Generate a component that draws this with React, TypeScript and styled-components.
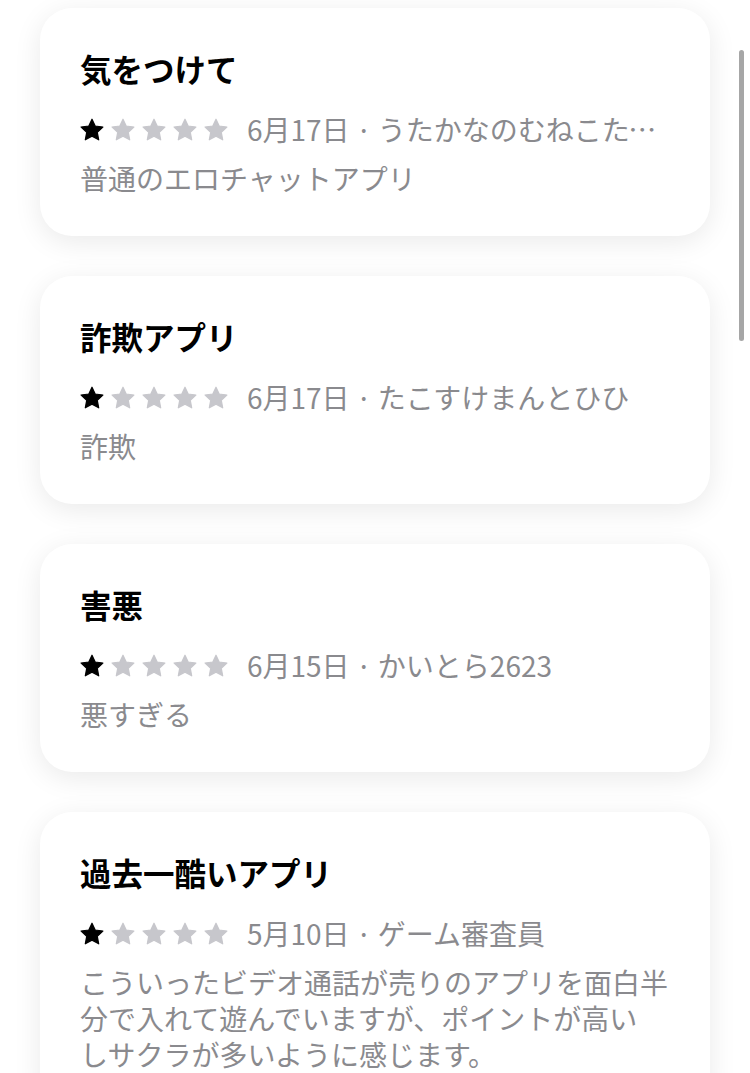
import React from "react";
import styled, { createGlobalStyle } from "styled-components";

const Global = createGlobalStyle`
  html, body { margin: 0; padding: 0; background: #ffffff; }
  body {
    font-family: "Noto Sans CJK JP", "Noto Sans", sans-serif;
    -webkit-font-smoothing: antialiased;
    overflow: hidden;
  }
`;

const Page = styled.div`
  display: flex;
  flex-direction: column;
  gap: 40px;
  padding: 8px 40px 40px 40px;
  height: 1073px;
  box-sizing: border-box;
  overflow: hidden;
`;

const Card = styled.div`
  flex-shrink: 0;
  background: #ffffff;
  border-radius: 32px;
  box-shadow: 0 6px 28px rgba(0, 0, 0, 0.085);
  padding: 40px 40px 40px 40px;
  display: flex;
  flex-direction: column;
  min-height: 228px;
  box-sizing: border-box;
`;

const Title = styled.div`
  font-size: 31.5px;
  line-height: 40px;
  font-weight: 700;
  color: #000000;
  white-space: nowrap;
`;

const MetaRow = styled.div`
  display: flex;
  align-items: center;
  margin-top: 23px;
  height: 36px;
`;

const Stars = styled.div`
  display: flex;
  align-items: center;
  gap: 7px;
  flex-shrink: 0;
  margin-right: 19px;
`;

const Meta = styled.div`
  font-size: 28px;
  line-height: 42px;
  color: #8a8a8e;
  white-space: nowrap;
  overflow: hidden;
  text-overflow: ellipsis;
  min-width: 0;
`;

const Body = styled.div`
  margin-top: 13px;
  font-size: 28px;
  line-height: 36px;
  color: #8a8a8e;
`;

const ScrollIndicator = styled.div`
  position: fixed;
  left: 739px;
  top: 50px;
  width: 5px;
  height: 291px;
  border-radius: 3px;
  background: #a6a6a6;
`;

const Star: React.FC<{ filled: boolean }> = ({ filled }) => {
  const c = filled ? "#000000" : "#c7c7cc";
  return (
    <svg width="24" height="23" viewBox="0 0 24 23">
      <path
        d="M12 1.2L15.2 8 22.9 9 17.3 14.3 18.7 21.8 12 18.1 5.3 21.8 6.7 14.3 1.1 9 8.8 8Z"
        fill={c}
        stroke={c}
        strokeWidth="1.2"
        strokeLinejoin="round"
      />
    </svg>
  );
};

type Review = {
  title: string;
  rating: number;
  meta: string;
  body: string[];
};

const reviews: Review[] = [
  {
    title: "気をつけて",
    rating: 1,
    meta: "6月17日 · うたかなのむねこたろうさん",
    body: ["普通のエロチャットアプリ"],
  },
  {
    title: "詐欺アプリ",
    rating: 1,
    meta: "6月17日 · たこすけまんとひひ",
    body: ["詐欺"],
  },
  {
    title: "害悪",
    rating: 1,
    meta: "6月15日 · かいとら2623",
    body: ["悪すぎる"],
  },
  {
    title: "過去一酷いアプリ",
    rating: 1,
    meta: "5月10日 · ゲーム審査員",
    body: [
      "こういったビデオ通話が売りのアプリを面白半",
      "分で入れて遊んでいますが、ポイントが高い",
      "しサクラが多いように感じます。",
    ],
  },
];

export default function App() {
  return (
    <>
      <Global />
      <Page>
        {reviews.map((r, i) => (
          <Card key={i}>
            <Title>{r.title}</Title>
            <MetaRow>
              <Stars>
                {[0, 1, 2, 3, 4].map((s) => (
                  <Star key={s} filled={s < r.rating} />
                ))}
              </Stars>
              <Meta>{r.meta}</Meta>
            </MetaRow>
            <Body>
              {r.body.map((line, j) => (
                <React.Fragment key={j}>
                  {line}
                  {j < r.body.length - 1 && <br />}
                </React.Fragment>
              ))}
            </Body>
          </Card>
        ))}
      </Page>
      <ScrollIndicator />
    </>
  );
}
